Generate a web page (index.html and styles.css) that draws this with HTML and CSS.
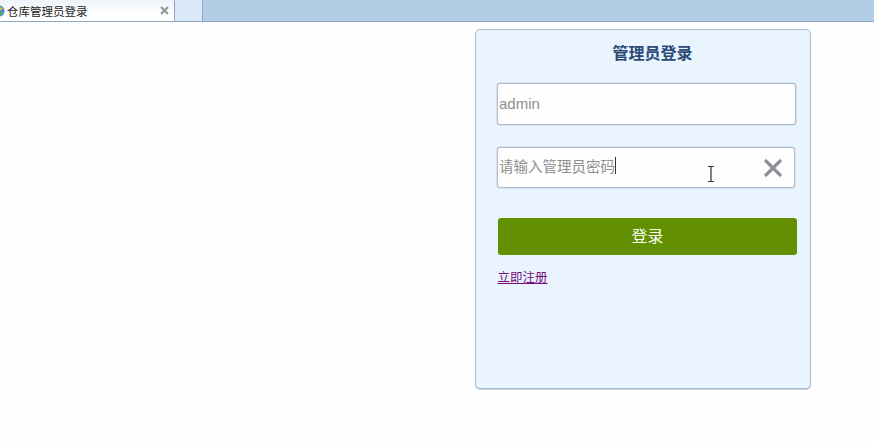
FILE: index.html
```html
<!DOCTYPE html>
<html lang="zh">
<head>
<meta charset="utf-8">
<title>仓库管理员登录</title>
<link rel="stylesheet" href="styles.css">
</head>
<body>
<header class="tabbar">
  <div class="tab">
    <svg class="tab-icon" width="12" height="14" viewBox="0 0 12 14"><circle cx="4" cy="7" r="5.500" fill="#3f8fd0"/><path d="M1 4c3-2 6-1 7 1-2 2-5 2-7-1z" fill="#e8b23c"/><path d="M0 10c2-2 5-2 8-1-2 3-5 3-8 1z" fill="#6ab04a"/></svg>
    <span class="tab-title">仓库管理员登录</span>
    <svg class="tab-close" width="9" height="9" viewBox="0 0 9 9"><path d="M1 1l7 7M8 1L1 8" stroke="#8f949a" stroke-width="2" fill="none"/></svg>
  </div>
  <div class="tab-new"></div>
</header>
<main class="page">
  <section class="card">
    <h1 class="card-title">管理员登录</h1>
    <div class="field field-user"><span class="field-text">admin</span></div>
    <div class="field field-pass">
      <span class="field-text">请输入管理员密码</span><span class="caret"></span>
      <svg class="field-clear" width="20" height="18" viewBox="0 0 20 18"><path d="M2 1l16 16M18 1L2 17" stroke="#8b9096" stroke-width="3.200" fill="none"/></svg>
      <svg class="ibeam" width="8" height="16" viewBox="0 0 8 16"><path d="M1 .5h6M1 15.500h6M4 .5v15" stroke="#333" stroke-width="1.200" fill="none"/></svg>
    </div>
    <button class="submit" type="button">登录</button>
    <a class="register" href="#">立即注册</a>
  </section>
</main>
</body>
</html>
```

FILE: styles.css
```css
* { box-sizing: border-box; }
html, body { margin: 0; height: 100%; }
body {
  background: #fefefe;
  font-family: "Liberation Sans", "Noto Sans CJK SC", sans-serif;
  overflow: hidden;
}
.tabbar {
  display: flex;
  height: 22px;
  background: #b3cde6;
  border-bottom: 1px solid #8fa6bd;
}
.tab {
  display: flex;
  align-items: center;
  width: 175px;
  padding-right: 5px;
  background: linear-gradient(#eef3f8, #ffffff 70%);
  border-right: 1px solid #8fa6bd;
}
.tab-icon { margin-left: -5px; flex: none; }
.tab-title { font-size: 11.500px; color: #1c1c1c; }
.tab-close { margin-left: auto; }
.tab-new {
  width: 28px;
  background: #dce9f8;
  border-right: 1px solid #8fa6bd;
}
.page {
  display: flex;
  justify-content: flex-end;
  padding: 7px 63px 0 0;
}
.card {
  width: 336px;
  height: 360px;
  padding: 14px 14px 0 21px;
  background: #eaf4fe;
  border: 1px solid #a9bbd1;
  border-radius: 5px;
  box-shadow: 0 1px 0 #c4d2e2;
}
.card-title {
  margin: 0 0 19px;
  padding-left: 12px;
  font-size: 16px;
  line-height: 20px;
  font-weight: bold;
  text-align: center;
  color: #2b4a78;
}
.field {
  position: relative;
  display: flex;
  align-items: center;
  width: 299px;
  padding-left: 1px;
  background: #fefefe;
  border: 1px solid #aebdd0;
  border-radius: 3px;
  box-shadow: 0 0 0 .5px #c3cfdd;
  color: #8f8f8f;
}
.field-user { height: 42px; margin-bottom: 22px; padding-bottom: 2px; font-size: 15px; }
.field-pass { width: 298px; height: 41px; margin-bottom: 30px; padding-bottom: 4px; font-size: 14.500px; }
.caret { width: 1px; height: 17px; background: #333; }
.field-clear { position: absolute; right: 11px; top: 11px; }
.ibeam { position: absolute; left: 209px; top: 18px; }
.submit {
  display: block;
  width: 299px;
  height: 37px;
  margin: 0 0 13px 1px;
  padding: 0 0 4px;
  background: #629000;
  border: 0;
  border-radius: 3px;
  color: #fbfdf2;
  font: inherit;
  font-size: 16px;
}
.register {
  display: inline-block;
  margin-left: .5px;
  font-size: 12.500px;
  line-height: 17px;
  color: #75107a;
}
```
